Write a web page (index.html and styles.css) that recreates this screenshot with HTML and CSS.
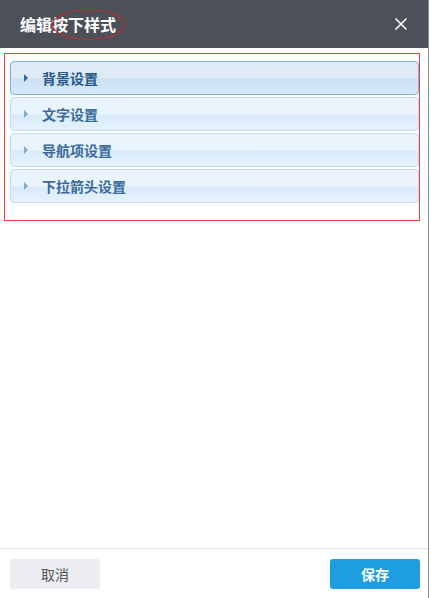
FILE: index.html
```html
<!DOCTYPE html>
<html lang="zh">
<head>
<meta charset="utf-8">
<link rel="stylesheet" href="styles.css">
</head>
<body>
<div class="dialog">
  <div class="header">
    <div class="title">编辑按下样式<span class="ellipse"></span></div>
    <svg class="close" width="14" height="14" viewBox="0 0 14 14"><path d="M1.5 1.5 L12.5 12.5 M12.5 1.5 L1.5 12.5" stroke="#fff" stroke-width="1.6" fill="none"/></svg>
  </div>
  <div class="content">
    <div class="panel">
      <div class="item active"><span class="tri"></span><span class="label">背景设置</span></div>
      <div class="item"><span class="tri"></span><span class="label">文字设置</span></div>
      <div class="item"><span class="tri"></span><span class="label">导航项设置</span></div>
      <div class="item"><span class="tri"></span><span class="label">下拉箭头设置</span></div>
    </div>
  </div>
  <div class="footer">
    <button class="btn cancel">取消</button>
    <button class="btn save">保存</button>
  </div>
</div>
</body>
</html>
```
FILE: styles.css
```css
html, body { margin: 0; padding: 0; background: #fff; }
body { font-family: "Noto Sans CJK SC", "Noto Sans", sans-serif; }
* { box-sizing: border-box; }
.dialog {
  width: 429px;
  height: 598px;
  border-right: 1px solid #8c8c8c;
  display: flex;
  flex-direction: column;
  background: #fff;
}
.header {
  height: 48px;
  background: #4b5059;
  display: flex;
  align-items: center;
  justify-content: space-between;
  padding: 0 20px;
  flex-shrink: 0;
}
.title {
  position: relative;
  color: #fff;
  font-size: 16px;
  font-weight: bold;
  line-height: 20px;
}
.ellipse {
  position: absolute;
  left: 32px;
  top: -5px;
  width: 73px;
  height: 31px;
  border: 1px solid #d0272d;
  border-radius: 50%;
}
.content {
  flex: 1;
  padding: 5px 8px 0 4px;
}
.panel {
  border: 1px solid #f23a3a;
  padding: 7px 0 17px 5px;
  display: flex;
  flex-direction: column;
  gap: 2px;
}
.item {
  height: 34px;
  border: 1px solid #c4dbef;
  border-radius: 4px;
  background: linear-gradient(#eaf4fd 0%, #eaf4fd 50%, #d9ebfb 53%, #e5f2fd 100%);
  display: flex;
  align-items: center;
  padding-left: 13px;
}
.item.active {
  border-color: #7cb4e2;
  background: linear-gradient(#deeaf6 0%, #deeaf6 50%, #cbe1f4 53%, #d7e8f7 100%);
}
.tri {
  width: 0; height: 0;
  border-left: 4px solid #7faad3;
  border-top: 4px solid transparent;
  border-bottom: 4px solid transparent;
  margin-right: 14px;
}
.item.active .tri { border-left-color: #2a6aab; }
.label {
  font-size: 14px;
  font-weight: bold;
  color: #3a6a9b;
}
.item.active .label { color: #27578a; }
.footer {
  height: 50px;
  border-top: 1px solid #e3e3e3;
  display: flex;
  justify-content: space-between;
  align-items: flex-start;
  padding: 10px 8px 0 10px;
  flex-shrink: 0;
}
.btn {
  width: 90px;
  height: 30px;
  border: none;
  border-radius: 3px;
  font-family: "Noto Sans CJK SC", sans-serif;
  font-size: 14px;
}
.cancel { background: #ebedf1; color: #555; }
.save { background: #1e9de0; color: #fff; font-weight: bold; }
```
